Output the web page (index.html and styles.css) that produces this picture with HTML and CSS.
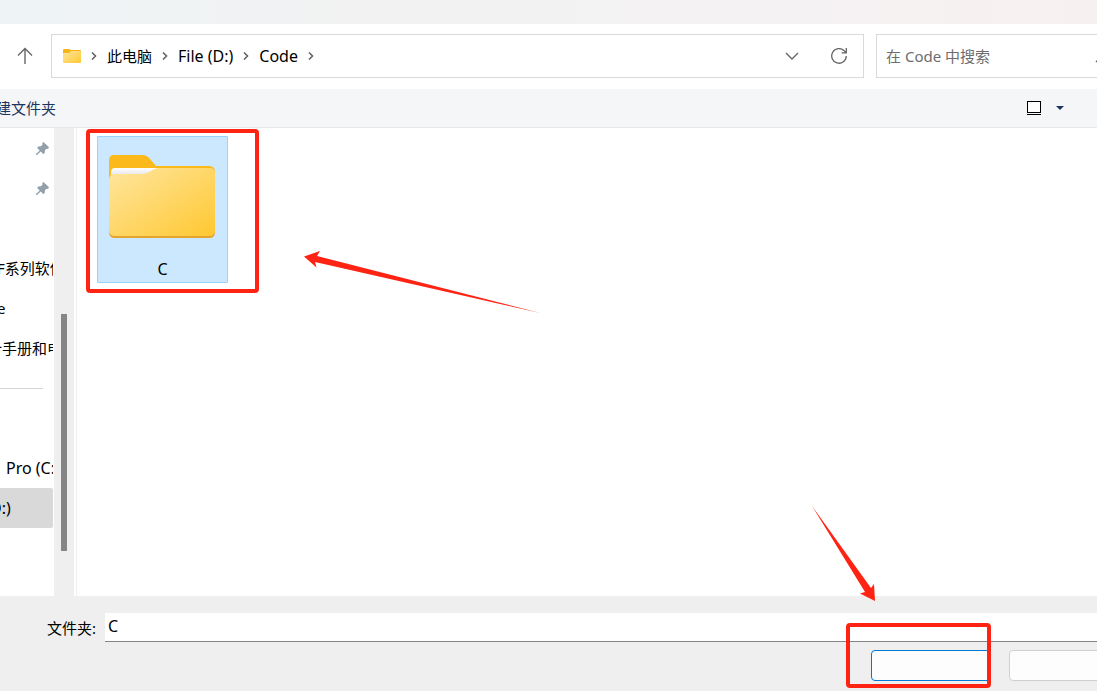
FILE: index.html
```html
<!DOCTYPE html>
<html lang="zh-CN">
<head>
  <meta charset="UTF-8">
  <title>选择文件夹</title>
  <meta name="viewport" content="width=device-width, initial-scale=1">
  <link rel="stylesheet" href="styles.css">
</head>
<body>
  <div class="titlebar"></div>

  <header class="address-row">
    <button class="icon-button up" aria-label="向上">
      <svg width="16" height="18" viewBox="0 0 16 18"><path d="M8 17V1.5M1 8.5L8 1.5l7 7" fill="none" stroke="#666" stroke-width="1.4"/></svg>
    </button>
    <nav class="address" aria-label="路径">
      <svg class="icon" width="18" height="14" viewBox="0 0 18 14">
        <path d="M0 1Q0 0 1 0H6L8 1H17Q18 1 18 2V13H0Z" fill="#f7b416"/>
        <path d="M0 5Q0 4 1 4H6L8 2H17Q18 2 18 3V13Q18 14 17 14H1Q0 14 0 13Z" fill="url(#folder-front)"/>
      </svg>
      <svg class="icon" width="6" height="8" viewBox="0 0 6 8"><path d="M1 .5L4.5 4 1 7.5" fill="none" stroke="#666" stroke-width="1.6"/></svg>
      <a class="crumb cjk" href="#">此电脑</a>
      <svg class="icon" width="6" height="8" viewBox="0 0 6 8"><path d="M1 .5L4.5 4 1 7.5" fill="none" stroke="#666" stroke-width="1.6"/></svg>
      <a class="crumb" href="#">File (D:)</a>
      <svg class="icon" width="6" height="8" viewBox="0 0 6 8"><path d="M1 .5L4.5 4 1 7.5" fill="none" stroke="#666" stroke-width="1.6"/></svg>
      <a class="crumb" href="#">Code</a>
      <svg class="icon" width="6" height="8" viewBox="0 0 6 8"><path d="M1 .5L4.5 4 1 7.5" fill="none" stroke="#666" stroke-width="1.6"/></svg>
      <div class="address-tools">
        <button class="icon-button" aria-label="展开">
          <svg width="14" height="8" viewBox="0 0 14 8"><path d="M1 1l6 6 6-6" fill="none" stroke="#666" stroke-width="1.4"/></svg>
        </button>
        <button class="icon-button" aria-label="刷新">
          <svg width="16" height="16" viewBox="0 0 16 16"><path d="M15.3 8A7.3 7.3 0 1 1 13.2 2.8L15 4.6M15.3 0V4.800H10.6" fill="none" stroke="#666" stroke-width="1.3"/></svg>
        </button>
      </div>
    </nav>
    <div class="search">
      <input class="search-input" type="text" aria-label="搜索" placeholder="在 Code 中搜索">
      <svg class="icon" width="16" height="16" viewBox="0 0 16 16"><path d="M1 14l5-5" stroke="#666" stroke-width="1.4"/><circle cx="10" cy="5.5" r="4.5" fill="none" stroke="#666" stroke-width="1.4"/></svg>
    </div>
  </header>

  <div class="toolbar">
    <button class="new-folder">新建文件夹</button>
    <button class="view-button" aria-label="视图">
      <svg width="14" height="14" viewBox="0 0 14 14" shape-rendering="crispEdges"><rect x=".5" y=".5" width="13" height="11" fill="#fff" stroke="#000"/><path d="M0 13.5H14" stroke="#000"/></svg>
      <svg width="8" height="4" viewBox="0 0 8 4"><path d="M0 0h8L4 4z" fill="#1c355e"/></svg>
    </button>
  </div>

  <main class="main">
    <aside class="sidebar">
      <ul class="tree">
        <li class="tree-item pinned">
          <svg width="13" height="13" viewBox="0 0 13 13"><path d="M7.5 0L13 5.2 12 7 10.500 6.800 9 8.300 8.600 11.200 7.200 12 4.700 9.400 1 13H0V12L3.700 8.400 1.200 5.900 2.100 4.500 5 4.300 6.600 2.600 6.300 1Z" fill="#93a0a9"/></svg>
        </li>
        <li class="tree-item pinned">
          <svg width="13" height="13" viewBox="0 0 13 13"><path d="M7.5 0L13 5.2 12 7 10.500 6.800 9 8.300 8.600 11.200 7.200 12 4.700 9.400 1 13H0V12L3.700 8.400 1.200 5.900 2.100 4.500 5 4.300 6.600 2.600 6.300 1Z" fill="#93a0a9"/></svg>
        </li>
        <li class="tree-item"></li>
        <li class="tree-item folder">F系列软件</li>
        <li class="tree-item folder">e</li>
        <li class="tree-item folder-long">计手册和电</li>
        <li class="tree-item divider"></li>
        <li class="tree-item"></li>
        <li class="tree-item drive">Pro (C:)</li>
        <li class="tree-item drive-selected">D:)</li>
      </ul>
      <div class="scrollbar"><div class="thumb"></div></div>
    </aside>

    <section class="files">
      <button class="file">
        <svg width="108" height="86" viewBox="0 0 108 86">
          <defs>
            <linearGradient id="folder-front" x1="0" y1="0" x2="1" y2="1">
              <stop offset="0" stop-color="#ffe69f"/>
              <stop offset="1" stop-color="#ffc832"/>
            </linearGradient>
            <linearGradient id="folder-paper" x1="0" y1="0" x2="0" y2="1">
              <stop offset="0" stop-color="#fff"/>
              <stop offset="1" stop-color="#d8d8e0"/>
            </linearGradient>
          </defs>
          <path d="M0 24V7Q0 2 5 2H33Q38 2 41 6L47 13H100Q106 13 106 19V40H0Z" fill="#fbb91a"/>
          <path d="M2 26V19Q2 15 6 15H50L42 23H6Z" fill="url(#folder-paper)"/>
          <path d="M0 27V79Q0 85 6 85H100Q106 85 106 79V30Z" fill="#e5a52b"/>
          <path d="M0 27Q0 21 6 21H32Q38 21 42 18Q46 15 50 15H100Q106 15 106 20V77Q106 83 100 83H6Q0 83 0 77Z" fill="url(#folder-front)"/>
        </svg>
        <span>C</span>
      </button>
      <div class="mark mark-file"></div>
      <svg class="arrow arrow-file" width="236" height="70" viewBox="0 0 236 70"><path d="M0 13.500L16 8 13 13 236 70 11 19 12.500 24.500Z" fill="#ff2314"/></svg>
    </section>
  </main>

  <footer class="footer">
    <div class="name-row">
      <label for="folder-name">文件夹:</label>
      <input id="folder-name" class="name-input" type="text" value="C">
    </div>
    <div class="buttons">
      <button class="button primary" aria-label="选择文件夹"></button>
      <button class="button" aria-label="取消"></button>
    </div>
    <div class="mark mark-button"></div>
    <svg class="arrow arrow-button" width="64" height="96" viewBox="0 0 64 96"><path d="M0 0L53 86 48 87.500 63 95 62 78 59 82Z" fill="#ff2314"/></svg>
  </footer>
</body>
</html>
```
FILE: styles.css
```css
* {
  box-sizing: border-box;
}
body {
  margin: 0;
  height: 100vh;
  display: flex;
  flex-direction: column;
  overflow: hidden;
  background: #fff;
  color: #000;
  font-family: "Noto Sans", "Noto Sans CJK SC", sans-serif;
  font-size: 15px;
  line-height: 20px;
}
button, input {
  font: inherit;
  color: inherit;
  margin: 0;
  padding: 0;
  border: none;
  background: none;
}
svg {
  display: block;
  flex: none;
}

.titlebar {
  height: 24px;
  flex: none;
  background: linear-gradient(90deg, #eef3f5, #f2f2f2 33%, #f4f2f3 66%, #f7f0f0);
}

/* address bar */
.address-row {
  display: flex;
  flex: none;
  height: 65px;
  padding: 10px 0 11px 17px;
}
.up {
  width: 34px;
}
.address {
  flex: 1;
  display: flex;
  align-items: center;
  gap: 10px;
  border: 1px solid #d9d9d9;
  padding: 0 16px 0 11px;
}
.crumb {
  color: #000;
  text-decoration: none;
  font-size: 16px;
  white-space: nowrap;
}
.crumb.cjk {
  font-size: 15px;
}
.address-tools {
  margin-left: auto;
  display: flex;
  align-items: center;
  gap: 32px;
}
.search {
  display: flex;
  align-items: center;
  width: 260px;
  margin: 0 -39px 0 12px;
  padding: 0 24px 0 9px;
  border: 1px solid #d9d9d9;
}
.search-input {
  flex: 1;
  min-width: 0;
  outline: none;
}
.search-input::placeholder {
  color: #6d6d6d;
}

/* toolbar, runs past the left edge */
.toolbar {
  display: flex;
  flex: none;
  align-items: center;
  justify-content: space-between;
  height: 39px;
  margin-left: -19px;
  padding-right: 33px;
  background: #f4f6f8;
  border-bottom: 1px solid #e7e9eb;
}
.new-folder {
  color: #1c355e;
}
.view-button {
  display: flex;
  align-items: center;
  gap: 15px;
}

/* sidebar */
.main {
  flex: 1;
  min-height: 0;
  display: flex;
}
.sidebar {
  display: flex;
  flex: none;
  width: 109px;
  margin-left: -32px;
  border-right: 1px solid #f0f0f0;
}
.tree {
  flex: none;
  width: 85px;
  margin: 0;
  padding: 0;
  list-style: none;
}
.tree-item {
  display: flex;
  align-items: center;
  height: 40px;
  overflow: hidden;
  white-space: nowrap;
}
.pinned {
  justify-content: flex-end;
  padding-right: 4px;
}
.folder {
  padding-left: 29px;
}
.folder-long {
  padding-left: 19px;
}
.drive {
  padding-left: 38px;
  font-size: 16px;
}
.drive-selected {
  padding-left: 22px;
  font-size: 16px;
  background: #d9d9d9;
  border-radius: 2px;
}
.divider::before {
  content: "";
  width: 75px;
  border-top: 1px solid #d4d4d4;
}
.scrollbar {
  width: 20px;
  margin-left: 1px;
  padding: 186px 7px 45px;
  background: #efefef;
}
.thumb {
  height: 100%;
  background: #858585;
}

/* file list */
.files {
  position: relative;
  flex: 1;
  padding: 8px 20px;
}
.file {
  display: flex;
  flex-direction: column;
  align-items: center;
  justify-content: space-between;
  width: 131px;
  height: 147px;
  padding: 16px 0 3px;
  background: #cce8ff;
  border: 1px solid #99d1ff;
  border-radius: 1px;
  font-size: 16px;
}

/* footer */
.footer {
  position: relative;
  flex: none;
  padding: 17px 0 10px 47px;
  background: #efefef;
}
.name-row {
  display: flex;
  align-items: center;
  gap: 9px;
  height: 29px;
}
.name-input {
  flex: 1;
  height: 29px;
  padding: 0 3px 3px;
  background: #fff;
  border-bottom: 1px solid #848484;
  outline: none;
  font-size: 16px;
}
.buttons {
  display: flex;
  justify-content: flex-end;
  gap: 18px;
  margin: 8px -32px 0 0;
}
.button {
  width: 120px;
  height: 31px;
  background: #fdfdfd;
  border: 1px solid #d0d0d0;
  border-radius: 4px;
}
.primary {
  border-color: #0078d4;
}

/* red marks laid over the window */
.mark {
  position: absolute;
  border: 4px solid #ff2314;
  border-radius: 4px;
}
.mark-file {
  left: 9px;
  top: 1px;
  width: 173px;
  height: 164px;
}
.mark-button {
  right: 106px;
  top: 27px;
  width: 145px;
  height: 65px;
}
.arrow {
  position: absolute;
}
.arrow-file {
  left: 227px;
  top: 115px;
}
.arrow-button {
  right: 221px;
  top: -90px;
}
```
